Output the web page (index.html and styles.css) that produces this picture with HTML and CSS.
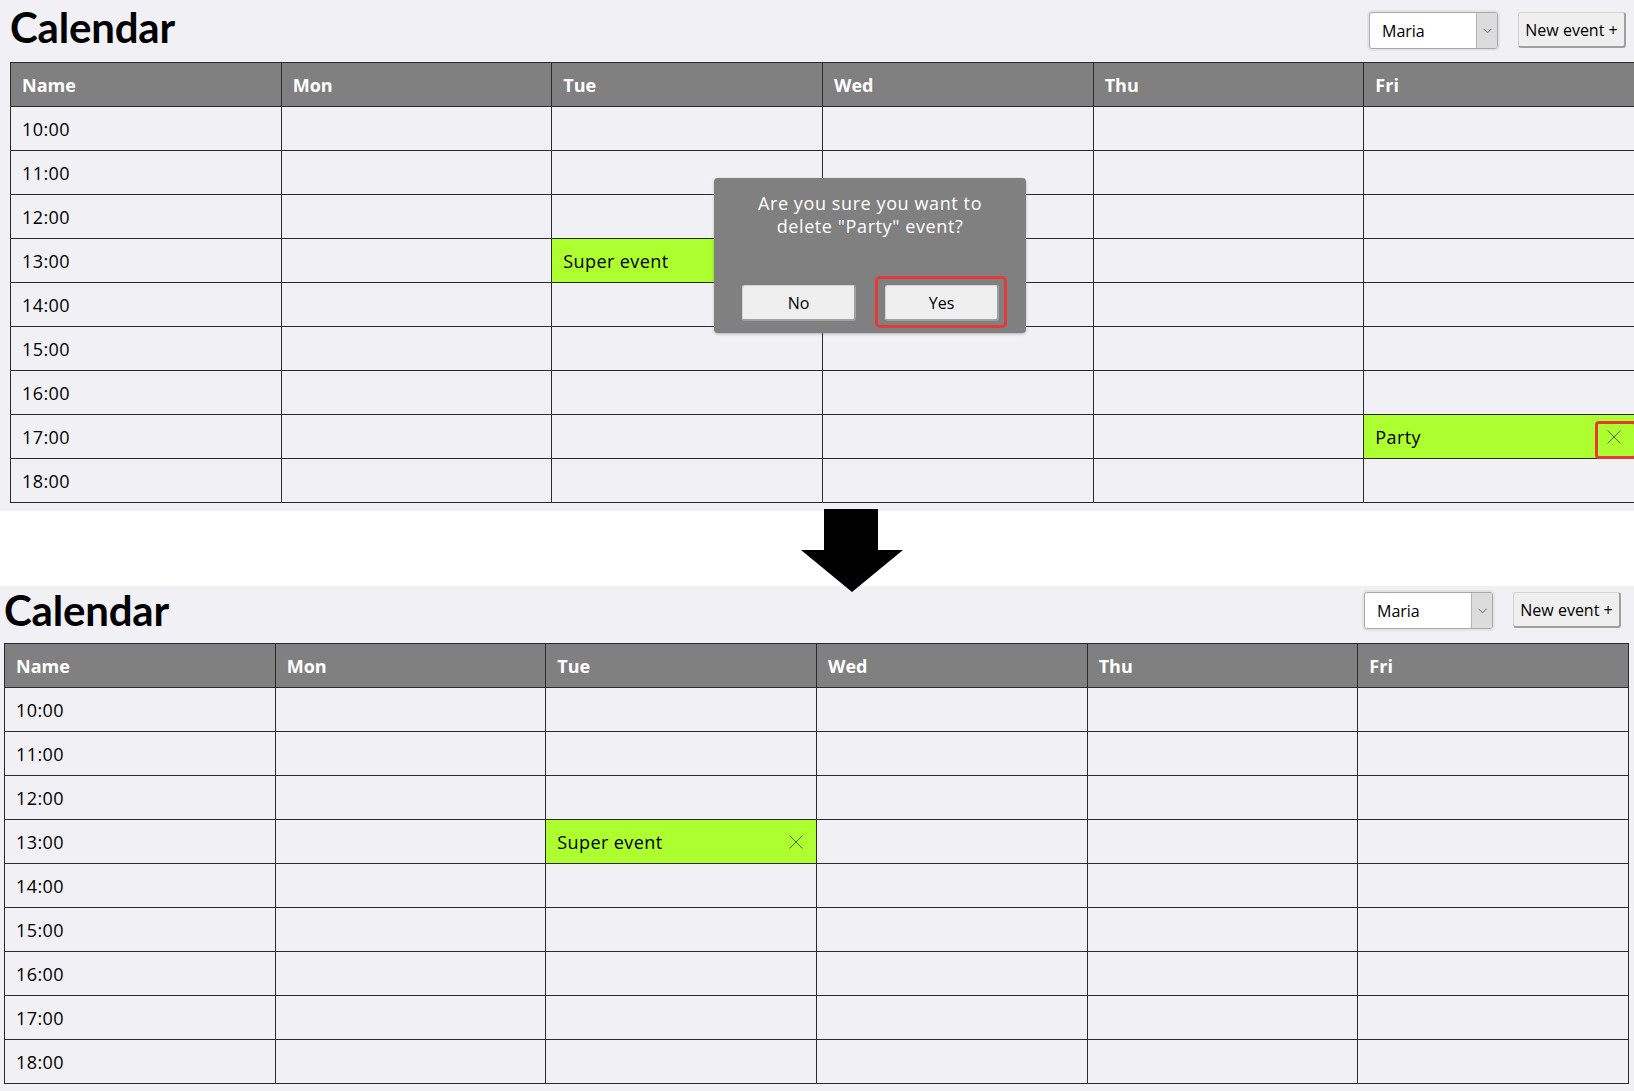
FILE: index.html
```html
<!DOCTYPE html>
<html lang="en">
<head>
<meta charset="utf-8">
<title>Calendar</title>
<link rel="stylesheet" href="styles.css">
</head>
<body>
<div class="page">

  <section class="panel panel-top">
    <div class="toolbar">
      <h1 class="title">Calendar</h1>
      <div class="controls">
        <div class="select"><span class="select-value">Maria</span><span class="select-arrow"><svg width="9" height="6" viewBox="0 0 9 6"><polyline points="0.5,0.8 4.5,4.8 8.5,0.8" fill="none" stroke="#666" stroke-width="1"/></svg></span></div>
        <button class="btn">New event +</button>
      </div>
    </div>
    <div class="calendar">
      <div class="cell head">Name</div><div class="cell head">Mon</div><div class="cell head">Tue</div><div class="cell head">Wed</div><div class="cell head">Thu</div><div class="cell head">Fri</div>
      <div class="cell">10:00</div><div class="cell"></div><div class="cell"></div><div class="cell"></div><div class="cell"></div><div class="cell"></div>
      <div class="cell">11:00</div><div class="cell"></div><div class="cell"></div><div class="cell"></div><div class="cell"></div><div class="cell"></div>
      <div class="cell">12:00</div><div class="cell"></div><div class="cell"></div><div class="cell"></div><div class="cell"></div><div class="cell"></div>
      <div class="cell">13:00</div><div class="cell"></div><div class="cell event"><span>Super event</span></div><div class="cell"></div><div class="cell"></div><div class="cell"></div>
      <div class="cell">14:00</div><div class="cell"></div><div class="cell"></div><div class="cell"></div><div class="cell"></div><div class="cell"></div>
      <div class="cell">15:00</div><div class="cell"></div><div class="cell"></div><div class="cell"></div><div class="cell"></div><div class="cell"></div>
      <div class="cell">16:00</div><div class="cell"></div><div class="cell"></div><div class="cell"></div><div class="cell"></div><div class="cell"></div>
      <div class="cell">17:00</div><div class="cell"></div><div class="cell"></div><div class="cell"></div><div class="cell"></div><div class="cell event"><span>Party</span><span class="close marked"><svg width="14" height="14" viewBox="0 0 14 14"><path d="M0.5 0.5 L13.5 13.5 M13.5 0.5 L0.5 13.5" stroke="#4f6b2a" stroke-width="1" fill="none"/></svg></span></div>
      <div class="cell">18:00</div><div class="cell"></div><div class="cell"></div><div class="cell"></div><div class="cell"></div><div class="cell"></div>
    </div>

    <div class="dialog">
      <p class="dialog-text">Are you sure you want to<br>delete "Party" event?</p>
      <div class="dialog-actions">
        <button class="btn dialog-btn">No</button>
        <button class="btn dialog-btn marked-btn">Yes</button>
      </div>
    </div>
  </section>

  <svg class="arrow" width="104" height="84" viewBox="0 0 104 84"><polygon points="24,0 78,0 78,41 103,41 52,83 1,41 24,41" fill="#000"/></svg>

  <section class="panel panel-bottom">
    <div class="toolbar">
      <h1 class="title">Calendar</h1>
      <div class="controls">
        <div class="select"><span class="select-value">Maria</span><span class="select-arrow"><svg width="9" height="6" viewBox="0 0 9 6"><polyline points="0.5,0.8 4.5,4.8 8.5,0.8" fill="none" stroke="#666" stroke-width="1"/></svg></span></div>
        <button class="btn">New event +</button>
      </div>
    </div>
    <div class="calendar">
      <div class="cell head">Name</div><div class="cell head">Mon</div><div class="cell head">Tue</div><div class="cell head">Wed</div><div class="cell head">Thu</div><div class="cell head">Fri</div>
      <div class="cell">10:00</div><div class="cell"></div><div class="cell"></div><div class="cell"></div><div class="cell"></div><div class="cell"></div>
      <div class="cell">11:00</div><div class="cell"></div><div class="cell"></div><div class="cell"></div><div class="cell"></div><div class="cell"></div>
      <div class="cell">12:00</div><div class="cell"></div><div class="cell"></div><div class="cell"></div><div class="cell"></div><div class="cell"></div>
      <div class="cell">13:00</div><div class="cell"></div><div class="cell event"><span>Super event</span><span class="close"><svg width="14" height="14" viewBox="0 0 14 14"><path d="M0.5 0.5 L13.5 13.5 M13.5 0.5 L0.5 13.5" stroke="#4f6b2a" stroke-width="1" fill="none"/></svg></span></div><div class="cell"></div><div class="cell"></div><div class="cell"></div>
      <div class="cell">14:00</div><div class="cell"></div><div class="cell"></div><div class="cell"></div><div class="cell"></div><div class="cell"></div>
      <div class="cell">15:00</div><div class="cell"></div><div class="cell"></div><div class="cell"></div><div class="cell"></div><div class="cell"></div>
      <div class="cell">16:00</div><div class="cell"></div><div class="cell"></div><div class="cell"></div><div class="cell"></div><div class="cell"></div>
      <div class="cell">17:00</div><div class="cell"></div><div class="cell"></div><div class="cell"></div><div class="cell"></div><div class="cell"></div>
      <div class="cell">18:00</div><div class="cell"></div><div class="cell"></div><div class="cell"></div><div class="cell"></div><div class="cell"></div>
    </div>
  </section>

</div>
</body>
</html>
```
FILE: styles.css
```css
* { box-sizing: border-box; }

html, body {
  margin: 0;
  padding: 0;
  background: #ffffff;
}

body {
  font-family: "Open Sans", "Noto Sans", sans-serif;
  color: #000;
}

.page {
  position: relative;
  width: 1634px;
  height: 1091px;
  overflow: hidden;
  display: flex;
  flex-direction: column;
  gap: 75px;
}

.panel {
  position: relative;
  background: #f0f0f5;
  overflow: hidden;
  flex: none;
}

.panel-top {
  height: 511px;
  padding-left: 10px;
}

.panel-bottom {
  height: 505px;
  padding-left: 4px;
}

.toolbar {
  display: flex;
  justify-content: space-between;
  align-items: flex-start;
  width: 1625px;
}

.panel-top .toolbar { height: 62px; }
.panel-bottom .toolbar { height: 57px; }

.title {
  margin: 0;
  font-family: "Lato", "Open Sans", sans-serif;
  font-size: 42px;
  line-height: 42px;
  font-weight: 700;
  letter-spacing: -0.2px;
}

.panel-top .title { margin-top: 6px; }
.panel-bottom .title { margin-top: 3px; }

.controls {
  display: flex;
  gap: 20px;
  align-items: flex-start;
}

.panel-top .controls { margin-top: 12px; margin-right: 9px; }
.panel-bottom .controls { margin-top: 6px; margin-right: 8px; }

.select {
  width: 129px;
  height: 37px;
  display: flex;
  background: #fff;
  border: 1px solid #a9a9a9;
  border-radius: 3px;
  box-shadow: 0 0 0 2px #e4e4e8;
  overflow: hidden;
}

.select-value {
  flex: 1;
  display: flex;
  align-items: center;
  padding-left: 12px;
  font-size: 16px;
}

.select-arrow {
  width: 21px;
  display: flex;
  align-items: center;
  justify-content: center;
  background: #dcdcdc;
  border-left: 1px solid #b4b4b4;
}

.btn {
  font-family: "Open Sans", "Noto Sans", sans-serif;
  font-size: 16px;
  color: #000;
  background: #efefef;
  border: 1px solid #d4d4d4;
  border-right: 2px solid #a0a0a0;
  border-bottom: 2px solid #a0a0a0;
  border-radius: 3px;
  padding: 0;
  width: 108px;
  height: 36px;
}

.calendar {
  display: grid;
  grid-template-columns: repeat(6, 1fr);
  width: 1625px;
  border-top: 1px solid #2b2b2b;
  border-left: 1px solid #2b2b2b;
}

.cell {
  height: 44px;
  border-right: 1px solid #2b2b2b;
  border-bottom: 1px solid #2b2b2b;
  padding: 0 13px 0 11px;
  display: flex;
  align-items: center;
  justify-content: space-between;
  font-size: 18px;
  letter-spacing: 0.4px;
}

.cell.head {
  background: #808080;
  color: #fff;
  font-weight: 700;
  letter-spacing: 0;
}

.cell.event {
  background: #adff2f;
}

.close {
  position: relative;
  display: flex;
  flex: none;
  width: 14px;
  height: 14px;
}

.close.marked::after {
  content: "";
  position: absolute;
  left: -12px;
  top: -9px;
  width: 36px;
  height: 32px;
  border: 3px solid #e53a3a;
  border-radius: 4px;
}

.dialog {
  position: absolute;
  left: 714px;
  top: 178px;
  width: 312px;
  height: 155px;
  background: #808080;
  border-radius: 4px;
  box-shadow: 0 1px 3px rgba(0, 0, 0, 0.25);
  padding: 14px 8px 12px;
  display: flex;
  flex-direction: column;
  justify-content: space-between;
}

.dialog-text {
  margin: 0;
  color: #fff;
  text-align: center;
  font-size: 18px;
  line-height: 23px;
  letter-spacing: 0.6px;
}

.dialog-actions {
  display: flex;
  justify-content: center;
  gap: 29px;
  padding-left: 1px;
}

.dialog-btn {
  width: 114px;
  height: 36px;
}

.marked-btn {
  position: relative;
}

.marked-btn::after {
  content: "";
  position: absolute;
  left: -11px;
  top: -10px;
  right: -10px;
  bottom: -9px;
  border: 3px solid #e53a3a;
  border-radius: 5px;
}

.arrow {
  position: absolute;
  left: 800px;
  top: 509px;
  z-index: 2;
}
```
